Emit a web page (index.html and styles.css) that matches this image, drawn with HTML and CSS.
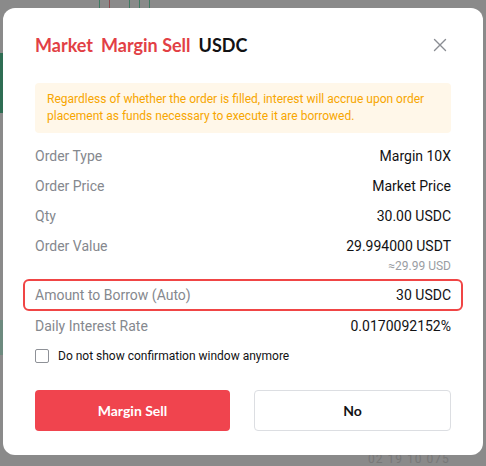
FILE: index.html
```html
<!DOCTYPE html>
<html>
<head>
<meta charset="utf-8">
<link rel="stylesheet" href="styles.css">
</head>
<body>
<div class="backdrop">
  <span class="bg-line l1"></span>
  <span class="bg-line l2 red"></span>
  <span class="bg-line l3"></span>
  <span class="bg-line l4"></span>
  <span class="bg-line l5"></span>
  <span class="bg-green g1"></span>
  <span class="bg-green g2"></span>
  <span class="bg-text">02 19 10 075</span>
</div>
<div class="modal">
  <div class="header">
    <h1 class="title"><span class="red">Market</span><span class="red">Margin Sell</span><span>USDC</span></h1>
    <svg class="close" width="14" height="14" viewBox="0 0 14 14"><path d="M1.5 1.5L12.5 12.5M12.5 1.5L1.5 12.5" stroke="#8a8d93" stroke-width="1.4" fill="none" stroke-linecap="round"/></svg>
  </div>
  <div class="notice">Regardless of whether the order is filled, interest will accrue upon order placement as funds necessary to execute it are borrowed.</div>
  <div class="rows">
    <div class="row"><span class="label">Order Type</span><span class="value">Margin 10X</span></div>
    <div class="row"><span class="label">Order Price</span><span class="value">Market Price</span></div>
    <div class="row"><span class="label">Qty</span><span class="value">30.00 USDC</span></div>
    <div class="row"><span class="label">Order Value</span><span class="value-col"><span class="value">29.994000 USDT</span><span class="sub">≈29.99 USD</span></span></div>
    <div class="row highlight"><span class="label">Amount to Borrow (Auto)</span><span class="value">30 USDC</span></div>
    <div class="row"><span class="label">Daily Interest Rate</span><span class="value">0.0170092152%</span></div>
  </div>
  <label class="check"><span class="box"></span><span>Do not show confirmation window anymore</span></label>
  <div class="actions">
    <button class="btn primary">Margin Sell</button>
    <button class="btn secondary">No</button>
  </div>
</div>
</body>
</html>
```
FILE: styles.css
```css
* { box-sizing: border-box; }
html, body { margin: 0; padding: 0; }
body {
  width: 486px;
  height: 466px;
  background: #8a8a8a;
  font-family: "Roboto", "Noto Sans", sans-serif;
  position: relative;
  overflow: hidden;
  padding: 8px 3px 0 3px;
}
.backdrop { position: absolute; inset: 0; }
.bg-line { position: absolute; top: 0; height: 8px; width: 1px; background: #3f7a62; }
.bg-line.red { background: #8a4a4e; }
.l1 { left: 99px; } .l2 { left: 109px; } .l3 { left: 129px; } .l4 { left: 139px; } .l5 { left: 149px; }
.bg-green { position: absolute; left: 0; width: 3px; }
.g1 { top: 53px; height: 60px; background: #2e6d53; }
.g2 { top: 320px; height: 35px; background: #6d8a7f; }
.bg-text { position: absolute; left: 368px; top: 452px; font-size: 12px; color: #787878; letter-spacing: 1px; }

.modal {
  position: relative;
  width: 480px;
  height: 447px;
  background: #fff;
  border-radius: 12px;
  padding: 25px 32px 24px;
}
.header { display: flex; align-items: center; justify-content: space-between; height: 24px; }
.title {
  margin: 0;
  font-family: "Lato", "Noto Sans", sans-serif;
  font-size: 18px;
  font-weight: 700;
  line-height: 24px;
  color: #121214;
  display: flex;
  gap: 8px;
}
.title .red { color: #e23f45; }
.close { margin-right: 4px; }

.notice {
  margin-top: 26px;
  background: #fff7e9;
  border-radius: 4px;
  padding: 8px 12px;
  color: #f7a600;
  font-size: 12px;
  line-height: 17px;
}
.rows { margin-top: 8px; display: flex; flex-direction: column; }
.row {
  display: flex;
  justify-content: space-between;
  align-items: flex-start;
  padding: 5px 0;
  font-size: 14px;
  line-height: 20px;
}
.label { color: #85888e; }
.value { color: #121214; }
.value-col { display: flex; flex-direction: column; align-items: flex-end; }
.sub { font-size: 12px; line-height: 16px; margin-top: 2px; color: #9a9da3; }
.row.highlight {
  margin: 0 -12px;
  border: 2px solid #f04545;
  border-radius: 6px;
  padding: 4px 10px;
}
.check {
  margin-top: 5px;
  display: flex;
  align-items: center;
  gap: 9px;
  font-size: 12px;
  line-height: 20px;
  color: #121214;
}
.box { width: 14px; height: 14px; border: 1px solid #8e9197; border-radius: 2px; }
.actions { margin-top: 24px; display: flex; gap: 24px; }
.btn {
  flex: 1;
  height: 41px;
  border-radius: 4px;
  font-family: "Lato", "Noto Sans", sans-serif;
  font-size: 14px;
  font-weight: 700;
}
.btn.primary { background: #f0444e; color: #fff; border: none; }
.btn.secondary { background: #fff; color: #121214; border: 1px solid #dcdee2; }
```
